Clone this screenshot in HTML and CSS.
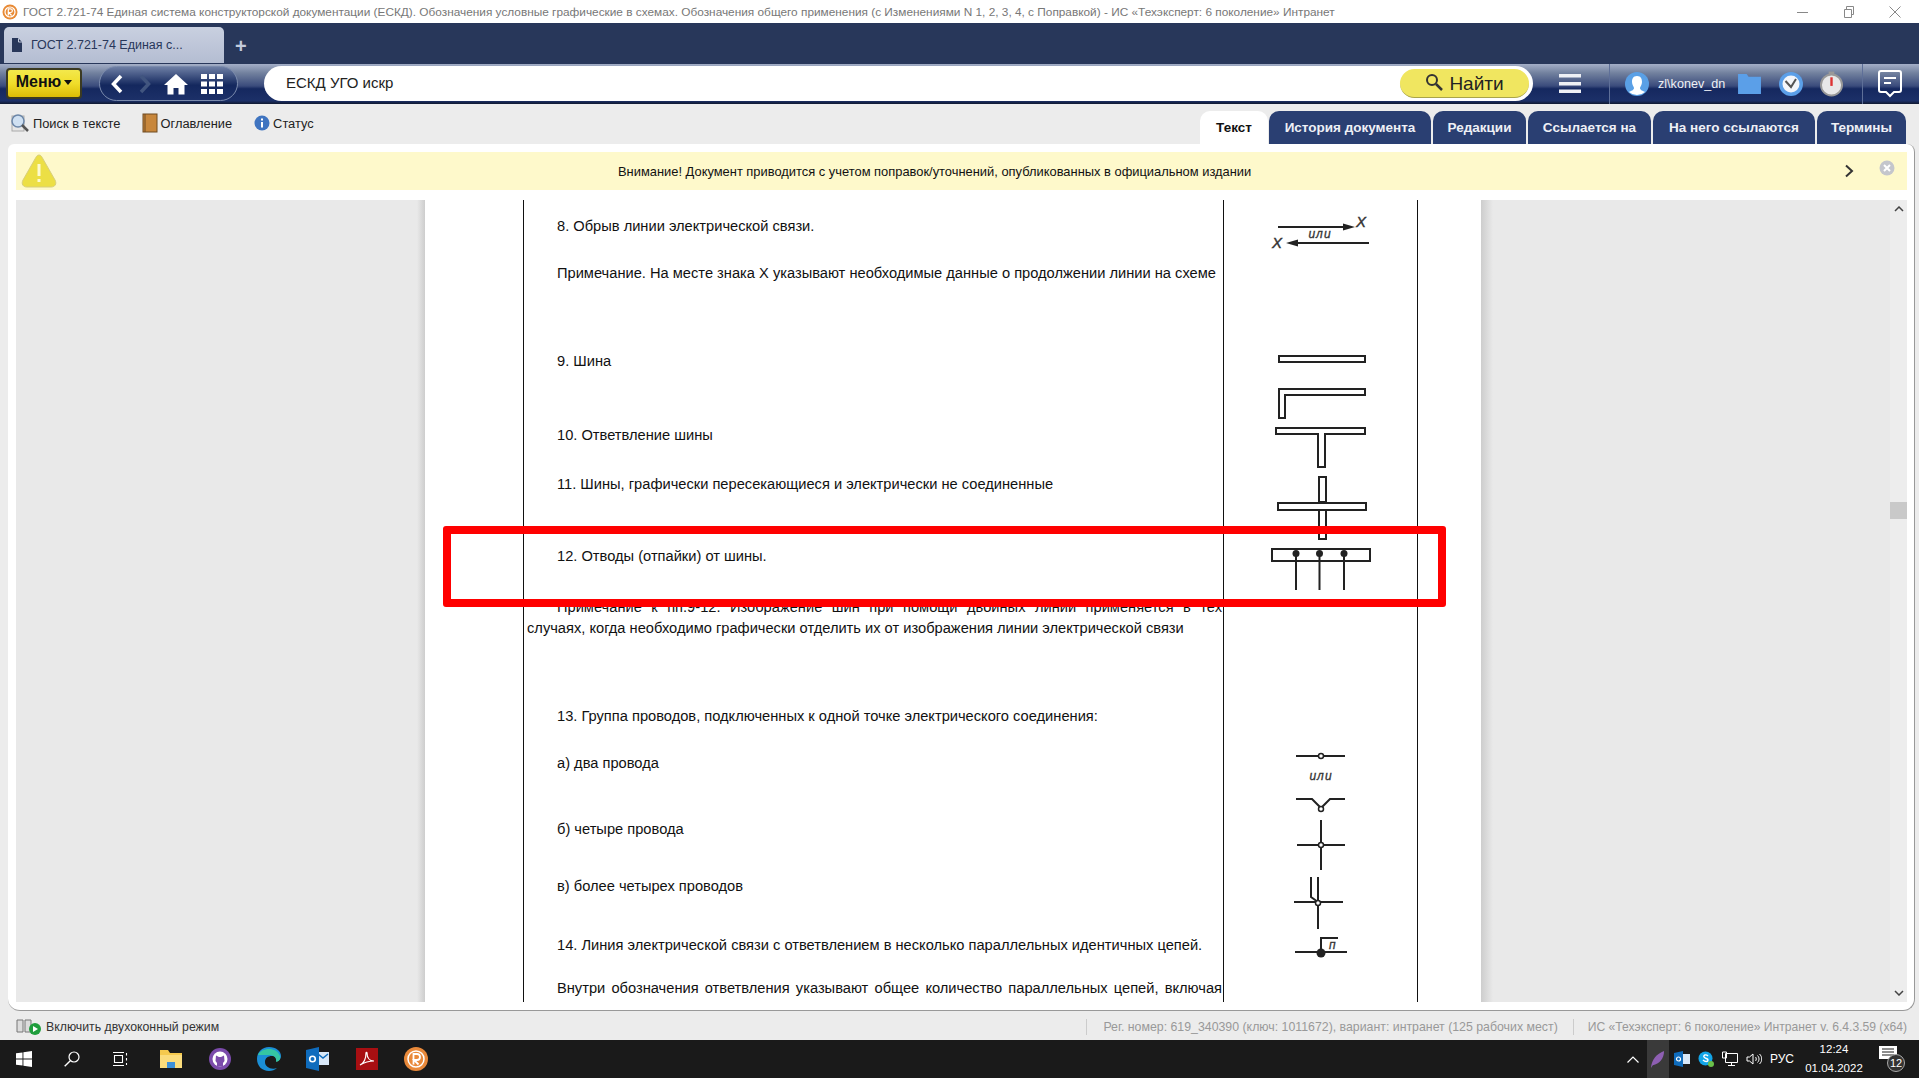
FILE: index.html
```html
<!DOCTYPE html>
<html lang="ru">
<head>
<meta charset="utf-8">
<title>ГОСТ 2.721-74</title>
<link rel="stylesheet" href="styles.css">
</head>
<body>
<div class="app">
  <header class="titlebar">
    <svg class="title-logo" viewBox="0 0 16 16"><circle cx="8" cy="8" r="7.5" fill="#e88a35"/><circle cx="8" cy="8" r="5" fill="none" stroke="#fff" stroke-width="1.2"/><path d="M6.3 11.5V4.8h2.2a1.8 1.8 0 0 1 0 3.7H6.6l3 3" fill="none" stroke="#fff" stroke-width="1.2"/></svg>
    <span class="title-text">ГОСТ 2.721-74 Единая система конструкторской документации (ЕСКД). Обозначения условные графические в схемах. Обозначения общего применения (с Изменениями N 1, 2, 3, 4, с Поправкой) - ИС «Техэксперт: 6 поколение» Интранет</span>
    <div class="win-controls">
      <svg viewBox="0 0 12 12"><path d="M0 6.5h11" stroke="#888" fill="none"/></svg>
      <svg viewBox="0 0 12 12"><path d="M1.5 3.5h7v8h-7zM3.5 3.5v-3h7v8h-2" stroke="#888" fill="none"/></svg>
      <svg viewBox="0 0 12 12"><path d="M.5.5l11 11M11.500.5l-11 11" stroke="#888" fill="none"/></svg>
    </div>
  </header>

  <div class="tabstrip">
    <div class="doc-tab">
      <svg class="doc-tab-icon" viewBox="0 0 12 14"><path d="M1 0h6l4 4v10H1z" fill="#28375a"/><path d="M7.500.5v3.500h3.500" fill="none" stroke="#c3cbdc"/></svg>
      <span>ГОСТ 2.721-74 Единая с...</span>
    </div>
    <span class="new-tab">+</span>
  </div>

  <div class="toolbar">
    <button class="menu-btn">Меню<i class="caret"></i></button>
    <div class="nav-pill">
      <svg class="nav-arrow" viewBox="0 0 14 20"><path d="M11 2L3.500 10 11 18" fill="none" stroke="#fff" stroke-width="3.500"/></svg>
      <svg class="nav-arrow" viewBox="0 0 14 20"><path d="M3 2l7.500 8L3 18" fill="none" stroke="#41557f" stroke-width="3.500"/></svg>
      <svg class="nav-home" viewBox="0 0 24 22"><path d="M12 1L0 12h3.500v9.500h6V15h5v6.500h6V12H24z" fill="#fff"/></svg>
      <svg class="nav-grid" viewBox="0 0 22 20"><path d="M0 0h6v5H0zM8 0h6v5H8zM16 0h6v5h-6zM0 7.500h6v5H0zM8 7.500h6v5H8zM16 7.500h6v5h-6zM0 15h6v5H0zM8 15h6v5H8zM16 15h6v5h-6z" fill="#fff"/></svg>
    </div>
    <div class="search">
      <span class="search-text">ЕСКД УГО искр</span>
      <button class="find-btn">
        <svg viewBox="0 0 18 18"><circle cx="7" cy="7" r="5" fill="none" stroke="#333" stroke-width="2"/><path d="M11 11l6 6" stroke="#333" stroke-width="2.500"/></svg>
        Найти
      </button>
    </div>
    <svg class="burger" viewBox="0 0 22 19"><path d="M0 0h22v3.500H0zM0 8h22v3.500H0zM0 15.500h22V19H0z" fill="#eef0f5"/></svg>
    <i class="tool-sep"></i>
    <svg class="tool-user" viewBox="0 0 24 24"><circle cx="12" cy="12" r="12" fill="#5aa0e6"/><path d="M12 4c4 0 5 3 5 6 0 3-2 5-2 6 0 2 3 3 5 4a12 12 0 0 1-16 0c2-1 5-2 5-4 0-1-2-3-2-6 0-3 1-6 5-6z" fill="#fff"/></svg>
    <span class="tool-name">zl\konev_dn</span>
    <svg class="tool-folder" viewBox="0 0 24 22"><path d="M0 1h9l2 3h13v18H0z" fill="#5b9fe8"/></svg>
    <svg class="tool-clock" viewBox="0 0 24 24"><circle cx="12" cy="12" r="12" fill="#5b9fe8"/><circle cx="12" cy="12" r="8.500" fill="#f4f6fa"/><path d="M6.500 9l5.500 6 5-8" fill="none" stroke="#555" stroke-width="2"/></svg>
    <svg class="tool-watch" viewBox="0 0 24 26"><rect x="9" y="0" width="6" height="3" fill="#999"/><circle cx="12" cy="14" r="11" fill="#e8e8e8" stroke="#999" stroke-width="2"/><path d="M12 6v9" stroke="#d33" stroke-width="2.500"/></svg>
    <i class="tool-sep tool-sep-last"></i>
    <svg class="tool-msg" viewBox="0 0 24 28"><path d="M3 1h18a2 2 0 0 1 2 2v17a2 2 0 0 1-2 2h-5l-4 4-4-4H3a2 2 0 0 1-2-2V3a2 2 0 0 1 2-2z" fill="none" stroke="#fff" stroke-width="2"/><path d="M6 8h12M6 13h7" stroke="#fff" stroke-width="2"/></svg>
  </div>

  <div class="subbar">
    <div class="sub-item">
      <svg viewBox="0 0 20 20"><rect x="2" y="3" width="12" height="15" fill="#e6e6e6" stroke="#aaa"/><circle cx="8" cy="8" r="6" fill="#cfe0f2" stroke="#6b86a8" stroke-width="1.500"/><path d="M12 12l6 6" stroke="#555" stroke-width="2.500"/></svg>
      <span>Поиск в тексте</span>
    </div>
    <div class="sub-item sub-book">
      <svg viewBox="0 0 16 20"><rect x="1" y="1" width="14" height="18" fill="#c8873c" stroke="#6f4a20"/><path d="M3 1v18" stroke="#6f4a20"/></svg>
      <span>Оглавление</span>
    </div>
    <div class="sub-item sub-status">
      <svg viewBox="0 0 16 16"><circle cx="8" cy="8" r="7.500" fill="#3f74c0"/><path d="M8 3.500v2M8 7v5.500" stroke="#fff" stroke-width="2"/></svg>
      <span>Статус</span>
    </div>
    <nav class="tabs">
      <a class="tab tab-active">Текст</a>
      <a class="tab tab-history">История документа</a>
      <a class="tab tab-red">Редакции</a>
      <a class="tab tab-ref">Ссылается на</a>
      <a class="tab tab-refby">На него ссылаются</a>
      <a class="tab tab-terms">Термины</a>
    </nav>
  </div>

  <main class="panel">
    <div class="notice">
      <svg class="notice-warn" viewBox="0 0 36 34"><path d="M18 1C16 1 15 3 14 5L2 26c-2 4 0 7 4 7h24c4 0 6-3 4-7L22 5c-1-2-2-4-4-4z" fill="#ecdf45" stroke="#d8cf7a"/><path d="M18 10v12M18 25v3" stroke="#fdfbd0" stroke-width="3"/></svg>
      <span class="notice-text">Внимание! Документ приводится с учетом поправок/уточнений, опубликованных в официальном издании</span>
      <svg class="notice-next" viewBox="0 0 10 14"><path d="M2 1.500L8 7l-6 5.500" fill="none" stroke="#333" stroke-width="2"/></svg>
      <svg class="notice-close" viewBox="0 0 16 16"><circle cx="8" cy="8" r="7.500" fill="#c4c6cc"/><path d="M5 5l6 6M11 5l-6 6" stroke="#fff" stroke-width="2"/></svg>
    </div>
    <div class="viewer">
      <div class="gutter gutter-left"></div>
      <article class="page">
        <div class="doc-table">
          <div class="doc-text">
            <p class="g0">8. Обрыв линии электрической связи.</p>
            <p class="g26">Примечание. На месте знака X указывают необходимые данные о продолжении линии на схеме</p>
            <p class="g67">9. Шина</p>
            <p class="g52">10. Ответвление шины</p>
            <p class="g28">11. Шины, графически пересекающиеся и электрически не соединенные</p>
            <p class="g51">12. Отводы (отпайки) от шины.</p>
            <p class="g30">Примечание к пп.9-12. Изображение шин при помощи двойных линий применяется в тех случаях, когда необходимо графически отделить их от изображения линии электрической связи</p>
            <p class="g67">13. Группа проводов, подключенных к одной точке электрического соединения:</p>
            <p class="g25">а) два провода</p>
            <p class="g45">б) четыре провода</p>
            <p class="g36">в) более четырех проводов</p>
            <p class="g38">14. Линия электрической связи с ответвлением в несколько параллельных идентичных цепей.</p>
            <p class="g22 line-full">Внутри обозначения ответвления указывают общее количество параллельных цепей, включая</p>
          </div>
          <div class="doc-symbols">
            <svg class="symbols" viewBox="1224 200 193 803">
              <g class="sym-line">
                <path d="M1278 227H1348M1369 243H1294"/>
                <path class="bus" d="M1279 356h86v6h-86zM1279 389h86v6h-80v23h-6zM1276 428h89v6h-40v33h-7v-33h-42zM1319 477h7v25h-7zM1278 503h88v7h-88zM1319 510h7v29h-7zM1272 549h98v12h-98z"/>
                <path class="thin" d="M1296 553v37M1319.500 553v37M1344 553v37M1296 756h49M1296 799h16l9 9 9-9h15M1297 845h48M1321 820v50M1294 902h49M1318 877v52M1311 877v20l7 5M1295 952h52M1321 952v-14h17"/>
              </g>
              <path class="fill" d="M1355 227l-12-3.500v7zM1286 243l12-3.500v7z"/>
              <g class="fill">
                <circle cx="1296" cy="553.500" r="3.500"/><circle cx="1319.500" cy="553.500" r="3.500"/><circle cx="1344" cy="553.500" r="3.500"/>
                <circle cx="1321" cy="953" r="4.500"/>
              </g>
              <g class="node">
                <circle cx="1321" cy="756" r="2.500"/><circle cx="1321" cy="809" r="2.500"/><circle cx="1321" cy="845" r="2.500"/><circle cx="1318" cy="903" r="2.500"/>
              </g>
              <text class="sym-x" x="1356" y="227">X</text>
              <text class="sym-x" x="1272" y="248">X</text>
              <text class="sym-note" x="1320" y="238" text-anchor="middle">или</text>
              <text class="sym-note" x="1321" y="780" text-anchor="middle">или</text>
              <text class="sym-note" x="1329" y="949">п</text>
            </svg>
          </div>
        </div>
      </article>
      <div class="gutter gutter-right"></div>
      <div class="scrollbar">
        <svg class="scroll-arrow" viewBox="0 0 10 6"><path d="M1 5l4-4 4 4" fill="none" stroke="#444" stroke-width="1.500"/></svg>
        <i class="scroll-thumb"></i>
        <svg class="scroll-arrow" viewBox="0 0 10 6"><path d="M1 1l4 4 4-4" fill="none" stroke="#444" stroke-width="1.500"/></svg>
      </div>
      <div class="red-frame"></div>
    </div>
  </main>

  <footer class="status">
    <svg class="status-icon" viewBox="0 0 26 16"><path d="M1 1h6v12H1zM9 1h6v12H9z" fill="#ddd" stroke="#777"/><circle cx="19" cy="10" r="6" fill="#1f9d3c"/><path d="M17 7l5 3-5 3z" fill="#fff"/></svg>
    <span class="status-mode">Включить двухоконный режим</span>
    <i class="status-sep"></i>
    <span class="status-reg">Рег. номер: 619_340390 (ключ: 1011672), вариант: интранет (125 рабочих мест)</span>
    <i class="status-sep status-sep-2"></i>
    <span class="status-ver">ИС «Техэксперт: 6 поколение» Интранет v. 6.4.3.59 (x64)</span>
  </footer>

  <div class="taskbar">
    <svg class="tb-win" viewBox="0 0 16 16"><path d="M0 2.300l6.500-.9v6.200H0zM7.400 1.300L16 0v7.600H7.400zM0 8.500h6.500v6.100L0 13.700zM7.400 8.500H16V16l-8.600-1.200z" fill="#fff"/></svg>
    <svg class="tb-search" viewBox="0 0 16 16"><circle cx="10" cy="6" r="5" fill="none" stroke="#fff" stroke-width="1.200"/><path d="M6.300 9.700L.7 15.300" stroke="#fff" stroke-width="1.400"/></svg>
    <svg class="tb-task" viewBox="0 0 16 16"><path d="M2.500 4.500h8v7h-8zM1 1.500h11M1 14.500h11M14.500 2v2.500M14.500 7v2.500M14.500 12v2" fill="none" stroke="#fff" stroke-width="1.100"/></svg>
    <svg class="tb-folder" viewBox="0 0 22 18"><path d="M0 0h8l2 3h12v15H0z" fill="#f5c94e"/><path d="M0 5h22v13H0z" fill="#fbdc7c"/><path d="M7 12h8v6H7z" fill="#3c8fd8"/></svg>
    <svg class="tb-github" viewBox="0 0 22 22"><circle cx="11" cy="11" r="11" fill="#7b4bab"/><circle cx="11" cy="11" r="7.500" fill="#fff"/><path d="M8 18.500v-3.500l-1.500-2 .5-5.500 3 1.500h2l3-1.500.5 5.500-1.500 2v3.500z" fill="#7b4bab"/></svg>
    <svg class="tb-edge" viewBox="0 0 24 24"><path d="M12 0C5 0 0 5 0 12c0 7 5 12 12 12 3 0 6-1 8-3-6 2-12-1-12-6 0-4 3-6 7-6 3 0 5 2 4 5 3 0 5-2 5-5C24 4 19 0 12 0z" fill="#1b8fd6"/><path d="M1 8C4 1 19-1 23 9c1 3-1 6-4 6 1-4-2-7-7-7-4 0-7 0-11 0z" fill="#35c6a2"/></svg>
    <svg class="tb-outlook" viewBox="0 0 23 24"><path d="M11 5h12v13H11z" fill="#d8e8f8"/><path d="M12 7l5 4 5-4" fill="none" stroke="#0f6cbd" stroke-width="1.500"/><path d="M0 3l13-3v24L0 21z" fill="#0f6cbd"/><circle cx="6.500" cy="12" r="2.800" fill="none" stroke="#fff" stroke-width="1.600"/></svg>
    <svg class="tb-pdf" viewBox="0 0 22 22"><rect width="22" height="22" fill="#a80f12"/><path d="M4 17c4-2 6-7 6-12 0-1 1-1 1 0 0 5 3 8 7 8-4 0-9 1-14 4z" fill="none" stroke="#fff" stroke-width="1.200"/></svg>
    <svg class="tb-r" viewBox="0 0 24 24"><circle cx="12" cy="12" r="12" fill="#e9893a"/><circle cx="12" cy="12" r="8" fill="none" stroke="#fff" stroke-width="1.500"/><path d="M9.500 17.500V7h3.500a3 3 0 0 1 0 6h-3l4.500 4.500" fill="none" stroke="#fff" stroke-width="1.800"/></svg>
    <div class="tray">
      <svg class="tray-up" viewBox="0 0 12 7"><path d="M.5 6.500L6 1l5.500 5.500" fill="none" stroke="#fff" stroke-width="1.200"/></svg>
      <span class="tray-active"><svg viewBox="0 0 16 20"><path d="M1 19C2 10 7 4 15 1c0 8-5 14-12 15z" fill="#8e5fb3"/></svg></span>
      <svg class="tray-ic" viewBox="0 0 16 16"><path d="M7 3h9v10H7z" fill="#d8e8f8"/><path d="M0 2l9-2v16l-9-2z" fill="#0f6cbd"/><circle cx="4.500" cy="8" r="2" fill="none" stroke="#fff" stroke-width="1.200"/></svg>
      <svg class="tray-ic" viewBox="0 0 16 16"><circle cx="7.500" cy="7.500" r="7" fill="#12a5e8"/><path d="M10 5c-2-2-5-1-4 1s4 1 4 3-3 2-5 0" fill="none" stroke="#fff" stroke-width="1.400"/><circle cx="13" cy="13" r="3" fill="#6ac04a"/></svg>
      <svg class="tray-ic" viewBox="0 0 16 16"><path d="M3.500 2.500h12v9h-12zM.5 1h4v6h-4zM9.500 11.500v3M6 14.500h7" fill="#1a1a1a" stroke="#fff"/></svg>
      <svg class="tray-ic" viewBox="0 0 16 16"><path d="M1 6h2.500L7 3v10l-3.500-3H1z" fill="none" stroke="#fff"/><path d="M9.500 6c1 1 1 3 0 4M11.500 4.500c2 2 2 5 0 7M13.500 3c3 3 3 7 0 10" fill="none" stroke="#fff"/></svg>
      <span class="tray-lang">РУС</span>
      <div class="tray-clock"><span>12:24</span><span>01.04.2022</span></div>
      <div class="tray-note">
        <svg viewBox="0 0 18 16"><path d="M0 0h18v13H0z" fill="#fff"/><path d="M3 3h12M3 6h12M3 9h12" stroke="#1a1a1a"/></svg>
        <b class="tray-badge">12</b>
      </div>
    </div>
  </div>
</div>
</body>
</html>
```

FILE: styles.css
```css
* { box-sizing: border-box; }
html, body { margin: 0; height: 100%; overflow: hidden; }
body { font-family: "Liberation Sans", Arial, sans-serif; color: #111; background: #ececec; }
svg { display: block; flex: none; }
button { font-family: inherit; padding: 0; cursor: pointer; }
.app { width: 1919px; height: 1078px; display: flex; flex-direction: column; }

/* title bar */
.titlebar { height: 23px; flex: none; background: #fff; display: flex; align-items: center; padding-left: 2px; }
.title-logo { width: 16px; height: 16px; margin-right: 5px; }
.title-text { font-size: 11.830px; color: #777; white-space: nowrap; }
.win-controls { margin-left: auto; display: flex; gap: 34px; padding-right: 18px; }
.win-controls svg { width: 12px; height: 12px; }

/* tab strip */
.tabstrip { height: 41px; flex: none; background: #28375a; display: flex; align-items: flex-end; padding-left: 4px; }
.doc-tab { width: 220px; height: 36px; background: linear-gradient(#c9d0e0, #b4bdd2); border-radius: 5px 5px 0 0; display: flex; align-items: center; padding-left: 7px; gap: 8px; font-size: 12.500px; color: #28375a; margin-bottom: 1px; }
.doc-tab-icon { width: 12px; height: 14px; }
.new-tab { color: #c3cbdc; font-size: 20px; font-weight: bold; margin: 0 0 6px 11px; line-height: 24px; }

/* toolbar */
.toolbar { height: 40px; flex: none; background: linear-gradient(#a3aec7 0%, #73829f 22%, #3a4b7c 55%, #15285f 62%, #1c3068 92%, #10192f 100%); display: flex; align-items: center; padding: 0 0 1px 6px; }
.menu-btn { width: 76px; height: 31px; padding-bottom: 3px; background: linear-gradient(#f3e84c, #f0dd2a 50%, #dcbc05); border: 2px solid #3b3a22; border-radius: 4px; font-size: 16px; font-weight: bold; color: #111; display: flex; align-items: center; justify-content: center; gap: 3px; }
.caret { width: 0; height: 0; border: 4.500px solid transparent; border-top: 5px solid #111; border-bottom: 0; }
.nav-pill { width: 139px; height: 35px; margin-left: 17px; border: 1px solid #7b8bad; border-radius: 18px; background: linear-gradient(#6d7ea4, #14285e 55%, #1c3068); display: flex; align-items: center; padding-left: 10px; }
.nav-arrow { width: 14px; height: 20px; margin-right: 14px; }
.nav-home { width: 24px; height: 22px; margin-left: -2px; }
.nav-grid { width: 22px; height: 20px; margin-left: 13px; }
.search { width: 1269px; height: 35px; margin-left: 26px; background: #fff; border-radius: 18px; display: flex; align-items: center; padding: 0 4px 0 22px; }
.search-text { font-size: 15px; color: #222; margin-bottom: 3px; }
.find-btn { margin-left: auto; width: 129px; height: 29px; border: 0; border-bottom: 1px solid #a9a44a; border-radius: 15px; background: #f0e660; display: flex; align-items: center; justify-content: center; gap: 6px; font-size: 19px; color: #222; padding-top: 1px; }
.find-btn svg { width: 18px; height: 18px; margin-top: -3px; }
.burger { width: 22px; height: 19px; margin-left: 26px; }
.tool-sep { width: 1px; height: 40px; background: #5e6f98; margin-left: 28px; }
.tool-sep-last { margin-left: 19px; }
.tool-user { width: 24px; height: 24px; margin-left: 15px; }
.tool-name { font-size: 12.600px; color: #eef0f5; margin-left: 9px; width: 71px; white-space: nowrap; }
.tool-folder { width: 23px; height: 21px; margin-left: 9px; }
.tool-clock { width: 24px; height: 24px; margin-left: 18px; }
.tool-watch { width: 23px; height: 26px; margin-left: 17px; }
.tool-msg { width: 24px; height: 28px; margin-left: 15px; }

/* sub toolbar */
.subbar { height: 40px; flex: none; background: #ececec; display: flex; padding-left: 10px; position: relative; }
.sub-item { display: flex; align-items: center; height: 38px; gap: 3px; font-size: 12.850px; color: #222; }
.sub-item svg { width: 20px; height: 20px; }
.sub-book { margin-left: 21px; }
.sub-book svg { width: 16px; height: 20px; }
.sub-status { margin-left: 22px; }
.sub-status svg { width: 16px; height: 16px; }
.tabs { margin-left: auto; margin-right: 13px; display: flex; align-self: flex-end; gap: 2px; }
.tab { height: 33px; background: #2a3f72; color: #eef0f6; font-size: 13.500px; font-weight: bold; border-radius: 10px 10px 0 0; display: flex; align-items: center; justify-content: center; }
.tab-active { width: 68px; background: #fff; color: #111; margin-right: -1px; }
.tab-history { width: 162px; }
.tab-red { width: 93px; }
.tab-ref { width: 123px; }
.tab-refby { width: 162px; }
.tab-terms { width: 89px; }

/* panel */
.panel { height: 867px; flex: none; margin: 0 4px 0 8px; background: #fff; border-radius: 6px 8px 12px 12px; border-right: 1px solid #999; border-bottom: 1px solid #999; padding: 8px 7px 7px 8px; display: flex; flex-direction: column; }
.notice { height: 38px; flex: none; background: #fef9cb; display: flex; align-items: center; position: relative; }
.notice-warn { width: 36px; height: 34px; margin-left: 5px; }
.notice-text { font-size: 12.900px; color: #111; margin-left: 561px; margin-top: 1px; white-space: nowrap; }
.notice-next { width: 10px; height: 14px; margin-left: auto; }
.notice-close { width: 16px; height: 16px; margin: -6px 12px 0 25px; }

.viewer { height: 802px; margin-top: 10px; flex: none; display: flex; position: relative; overflow: hidden; }
.gutter { background: #e9e9e9; }
.gutter-left { width: 409px; background: linear-gradient(to left, #cdcdcd, #e9e9e9 8px); }
.gutter-right { width: 409px; background: linear-gradient(to right, #cdcdcd, #e9e9e9 12px); }
.page { width: 1056px; background: #fff; padding-left: 98px; }
.doc-table { display: flex; height: 100%; width: 896px; border-left: 1px solid #111; }
.doc-text { width: 699px; padding: 16px 1px 0 3px; font-size: 14.667px; line-height: 21px; color: #111; text-align: justify; }
.doc-text p { margin: 0; text-indent: 30px; }
.doc-text .line-full { text-align-last: justify; }
.g0 { margin-top: 0; }
.doc-text .g22 { margin-top: 22px; }
.doc-text .g25 { margin-top: 25.500px; }
.doc-text .g26 { margin-top: 26px; }
.doc-text .g28 { margin-top: 28px; }
.doc-text .g30 { margin-top: 30px; }
.doc-text .g36 { margin-top: 36px; }
.doc-text .g38 { margin-top: 38px; }
.doc-text .g45 { margin-top: 45.500px; }
.doc-text .g51 { margin-top: 51.500px; }
.doc-text .g52 { margin-top: 52.500px; }
.doc-text .g67 { margin-top: 67px; }
.doc-symbols { width: 195px; height: 100%; border-left: 1px solid #111; border-right: 1px solid #111; }
.symbols { width: 193px; height: 803px; }
.sym-line { fill: none; stroke: #222; }
.sym-line > path:first-child { stroke-width: 2.200; }
.bus { stroke-width: 2; fill: #fff; }
.thin { stroke-width: 2; }
.fill { fill: #222; }
.node { fill: #fff; stroke: #222; stroke-width: 1.500; }
.sym-x { font-size: 15px; font-style: italic; fill: #333; stroke: #333; stroke-width: .4; }
.sym-note { font-size: 12px; font-style: italic; fill: #333; stroke: #333; stroke-width: .3; letter-spacing: 1px; }
.scrollbar { width: 17px; background: #ededed; display: flex; flex-direction: column; align-items: center; position: relative; padding: 6px 0; justify-content: space-between; }
.scroll-arrow { width: 10px; height: 6px; }
.scroll-thumb { position: absolute; left: 0; top: 302px; width: 17px; height: 17px; background: #c9c9c9; }
.red-frame { position: absolute; left: 427px; top: 326px; width: 1003px; height: 81px; border: 8px solid #f00; border-radius: 3px; }

/* status */
.status { height: 29px; flex: none; display: flex; align-items: center; padding: 2px 12px 0 16px; font-size: 12.330px; color: #999; }
.status-icon { width: 26px; height: 16px; }
.status-mode { color: #333; margin-left: 4px; font-size: 12.300px; white-space: nowrap; }
.status-sep { width: 1px; height: 16px; background: #ccc; margin-left: auto; }
.status-reg { margin-left: 16px; white-space: nowrap; }
.status-sep-2 { margin-left: 15px; }
.status-ver { margin-left: 14px; white-space: nowrap; font-size: 12.140px; }

/* taskbar */
.taskbar { height: 38px; flex: none; background: #1a1a1a; display: flex; align-items: center; padding-left: 16px; color: #fff; }
.tb-win, .tb-search, .tb-task { width: 16px; height: 16px; }
.tb-search { margin-left: 32px; }
.tb-task { margin-left: 32px; }
.tb-folder { width: 22px; height: 18px; margin-left: 32px; }
.tb-github { width: 22px; height: 22px; margin-left: 27px; }
.tb-edge { width: 24px; height: 24px; margin-left: 26px; }
.tb-outlook { width: 23px; height: 24px; margin-left: 25px; }
.tb-pdf { width: 22px; height: 22px; margin-left: 27px; }
.tb-r { width: 24px; height: 24px; margin-left: 26px; }
.tray { margin-left: auto; height: 100%; display: flex; align-items: center; padding-right: 14px; }
.tray-up { width: 12px; height: 7px; }
.tray-active { width: 22px; height: 38px; background: #3a3a3a; margin-left: 8px; display: flex; align-items: center; justify-content: center; }
.tray-active svg { width: 15px; height: 19px; }
.tray-ic { width: 16px; height: 16px; margin-left: 8px; }
.tray-active + .tray-ic { margin-left: 5px; }
.tray-lang { font-size: 12px; margin-left: 8px; }
.tray-clock { display: flex; flex-direction: column; align-items: center; font-size: 11.500px; line-height: 19px; width: 60px; margin-left: 10px; }
.tray-note { position: relative; width: 26px; height: 26px; margin-left: 15px; }
.tray-note svg { width: 18px; height: 16px; }
.tray-badge { position: absolute; right: 0; bottom: 0; width: 18px; height: 18px; border-radius: 50%; background: #333; border: 1px solid #aaa; font-size: 11px; font-weight: normal; line-height: 16px; text-align: center; }
```
